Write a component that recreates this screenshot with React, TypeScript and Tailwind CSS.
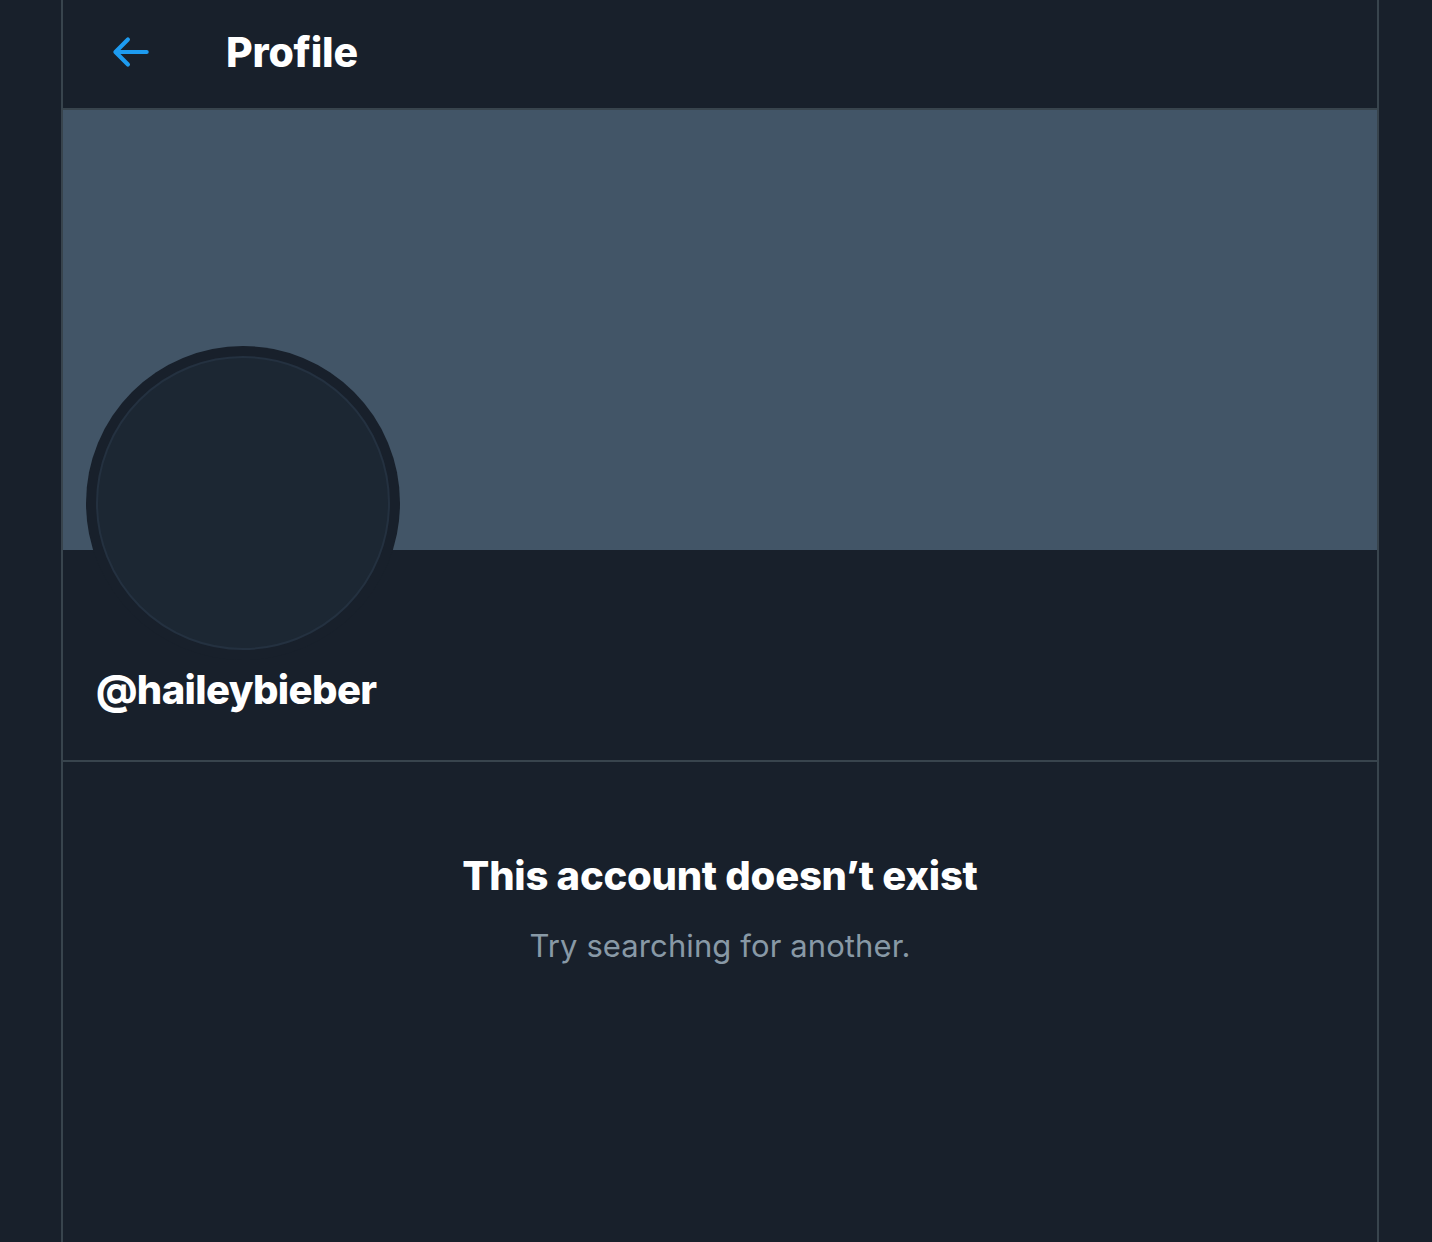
const BackArrow = () => (
    <svg viewBox="0 0 24 24" className="w-[50px] h-[50px] fill-[#1d9bf0]">
        <path d="M20 11H7.414l4.293-4.293a1 1 0 0 0-1.414-1.414l-6 6a1 1 0 0 0 0 1.414l6 6a.996.996 0 0 0 1.414 0 1 1 0 0 0 0-1.414L7.414 13H20a1 1 0 1 0 0-2z" />
    </svg>
);

const App = () => {
    return (
        <div
            className="min-h-screen bg-[#18202b] text-white"
            style={{ fontFamily: 'Inter, "Noto Sans", "Liberation Sans", sans-serif' }}
        >
            <div className="ml-[61px] w-[1318px] min-h-[1242px] border-x-2 border-[#38444d] flex flex-col">
                <div className="h-[110px] flex items-center border-b-2 border-[#38444d] pl-[42px]">
                    <button className="flex items-center justify-center mb-[4px]">
                        <BackArrow />
                    </button>
                    <h1 className="ml-[71px] text-[41px] font-extrabold tracking-[-0.2px] leading-none mb-[4px]">
                        Profile
                    </h1>
                </div>

                <div className="h-[440px] bg-[#425567]" />

                <div className="border-b-2 border-[#38444d] pb-[46px]">
                    <div className="-mt-[204px] ml-[23px] w-[314px] h-[314px] rounded-full bg-[#18202b] p-[10px]">
                        <div className="w-full h-full rounded-full bg-[#1c2733] border-2 border-[#243140]" />
                    </div>
                    <p className="mt-[6px] ml-[33px] text-[40px] font-extrabold tracking-[-0.6px] leading-[48px]">
                        @haileybieber
                    </p>
                </div>

                <div className="flex flex-col items-center pt-[88px]">
                    <h2 className="text-[40px] font-extrabold tracking-[-0.25px] leading-[52px]">
                        This account doesn’t exist
                    </h2>
                    <p className="mt-[24px] text-[31px] tracking-[0.1px] text-[#8899a6] leading-[40px]">
                        Try searching for another.
                    </p>
                </div>
            </div>
        </div>
    );
};

export default App;
